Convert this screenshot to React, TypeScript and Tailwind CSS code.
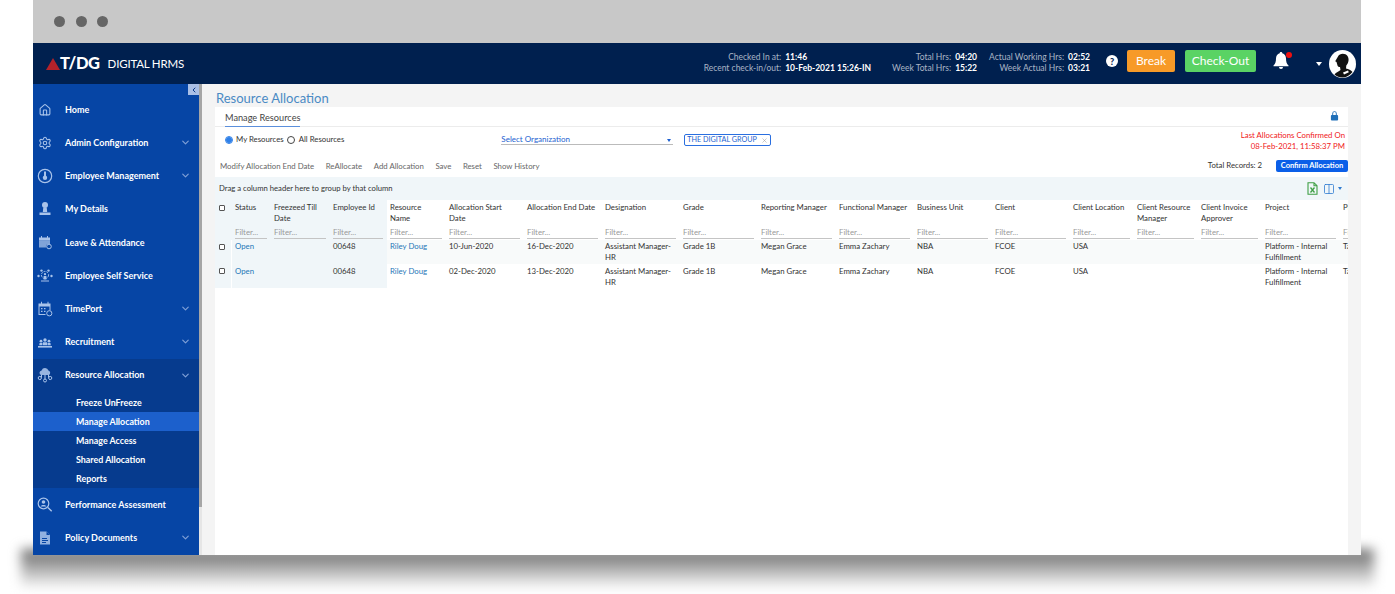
import React from "react";
import { Home, Settings, ChevronDown, ChevronLeft, Columns2, X } from "lucide-react";

type IconP = { className?: string };
const Svg = ({ className, children }: IconP & { children: React.ReactNode }) => (
  <svg viewBox="0 0 16 16" className={className} fill="currentColor">{children}</svg>
);
const HomeIcon = ({ className }: IconP) => <Home className={`${className} p-[1.5px]`} strokeWidth={2} />;
const GearIcon = ({ className }: IconP) => <Settings className={`${className} p-[1px]`} strokeWidth={1.8} />;
const EmpIcon = (p: IconP) => (
  <Svg {...p}>
    <circle cx="8" cy="8" r="6.7" fill="none" stroke="currentColor" strokeWidth="1.2" />
    <circle cx="8" cy="9.8" r="2.2" />
    <rect x="7" y="3.5" width="2" height="5" />
  </Svg>
);
const DetailsIcon = (p: IconP) => (
  <Svg {...p}>
    <circle cx="8" cy="4" r="3" />
    <path d="M6.3 6.5h3.4l.5 4.5H5.8z" />
    <path d="M2.5 11.5h11v2.5h-11z" />
  </Svg>
);
const LeaveIcon = (p: IconP) => (
  <Svg {...p}>
    <path d="M2 3.5h11v3H2zM4 2h1v2H4zM10 2h1v2h-1z" />
    <path d="M2 6.5h11V10h-1.5a3 3 0 0 0-2.5 3.5H2z" opacity=".75" />
    <circle cx="12" cy="12.5" r="2.3" fill="none" stroke="currentColor" strokeWidth="1" />
  </Svg>
);
const SelfIcon = (p: IconP) => (
  <Svg {...p}>
    <circle cx="8" cy="7" r="3.6" fill="none" stroke="currentColor" strokeWidth=".9" strokeDasharray="2 1" />
    <circle cx="8" cy="6.2" r="1.1" />
    <path d="M6.6 8h2.8v3.5H6.6z" />
    <circle cx="1.5" cy="8" r="1.2" /><circle cx="14.5" cy="8" r="1.2" />
    <circle cx="4.5" cy="2.6" r="1.2" /><circle cx="11.5" cy="2.6" r="1.2" />
    <path d="M4 12.5h8v1H4z" />
  </Svg>
);
const TimeIcon = (p: IconP) => (
  <Svg {...p}>
    <path d="M4 .8h1v2.4H4zM10.5.8h1v2.4h-1z" />
    <path d="M1.5 2.5h12v7h-1v-4h-10v7.5h6v1h-7z" />
    <path d="M4 7h1.5v1.3H4zM7 7h1.5v1.3H7zM4 9.7h1.5V11H4zM7 9.7h1.5V11H7z" />
    <circle cx="12.3" cy="12.3" r="2.6" fill="none" stroke="currentColor" strokeWidth="1" />
  </Svg>
);
const RecruitIcon = (p: IconP) => (
  <Svg {...p}>
    <circle cx="8" cy="6" r="1.7" /><circle cx="4" cy="7.2" r="1.4" /><circle cx="12" cy="7.2" r="1.4" />
    <path d="M6 8.3h4l.5 3h-5zM2.6 9h2.8l-.4 2.3H2.2zM10.6 9h2.8l.4 2.3h-2.8z" />
    <path d="M1 12h14v1.6H1z" />
  </Svg>
);
const ResIcon = (p: IconP) => (
  <Svg {...p}>
    <path d="M4 8a2.4 2.4 0 0 1 .6-4.6A3.6 3.6 0 0 1 11.4 3.6 2.4 2.4 0 0 1 12 8z" opacity=".9" />
    <g fill="none" stroke="currentColor" strokeWidth="1">
      <path d="M8 8v4.5M4.5 8v2.5M11.5 8v2.5" />
      <circle cx="2.8" cy="11" r="1.6" /><circle cx="13.2" cy="11" r="1.6" /><circle cx="8" cy="13.5" r="1.5" />
    </g>
  </Svg>
);
const PerfIcon = (p: IconP) => (
  <Svg {...p}>
    <circle cx="6.5" cy="6.5" r="5.3" fill="none" stroke="currentColor" strokeWidth="1.2" />
    <circle cx="6.5" cy="5" r="1.8" />
    <path d="M3.6 9.6c.5-2 5.3-2 5.8 0z" />
    <path d="M10.4 11l1-1 3.8 3.8-1 1z" />
  </Svg>
);
const DocIcon = (p: IconP) => (
  <Svg {...p}>
    <path d="M3 1.5h6.5L13 5v9.5H3z" opacity=".85" />
    <path d="M9.5 1.5V5H13z" fill="#0645a5" />
    <path d="M5 8h5v.9H5zM5 10h6v.9H5zM5 12h4v.9H5z" fill="#0645a5" />
  </Svg>
);

const nav1 = [
  { t: "Home", i: HomeIcon },
  { t: "Admin Configuration", i: GearIcon, c: true },
  { t: "Employee Management", i: EmpIcon, c: true },
  { t: "My Details", i: DetailsIcon },
  { t: "Leave & Attendance", i: LeaveIcon },
  { t: "Employee Self Service", i: SelfIcon },
  { t: "TimePort", i: TimeIcon, c: true },
  { t: "Recruitment", i: RecruitIcon, c: true },
];
const nav2 = [
  { t: "Performance Assessment", i: PerfIcon },
  { t: "Policy Documents", i: DocIcon, c: true },
];
const sub = ["Freeze UnFreeze", "Manage Allocation", "Manage Access", "Shared Allocation", "Reports"];

type C = { h: string; w: number; f?: boolean; v: string[] };
const cols: C[] = [
  { h: "Status", w: 39, f: true, v: ["Open", "Open"] },
  { h: "Freezeed Till Date", w: 59, f: true, v: ["", ""] },
  { h: "Employee Id", w: 57, f: true, v: ["00648", "00648"] },
  { h: "Resource Name", w: 59, v: ["Riley Doug", "Riley Doug"] },
  { h: "Allocation Start Date", w: 78, v: ["10-Jun-2020", "02-Dec-2020"] },
  { h: "Allocation End Date", w: 78, v: ["16-Dec-2020", "13-Dec-2020"] },
  { h: "Designation", w: 78, v: ["Assistant Manager-HR", "Assistant Manager-HR"] },
  { h: "Grade", w: 78, v: ["Grade 1B", "Grade 1B"] },
  { h: "Reporting Manager", w: 78, v: ["Megan Grace", "Megan Grace"] },
  { h: "Functional Manager", w: 78, v: ["Emma Zachary", "Emma Zachary"] },
  { h: "Business Unit", w: 78, v: ["NBA", "NBA"] },
  { h: "Client", w: 78, v: ["FCOE", "FCOE"] },
  { h: "Client Location", w: 64, v: ["USA", "USA"] },
  { h: "Client Resource Manager", w: 64, v: ["", ""] },
  { h: "Client Invoice Approver", w: 64, v: ["", ""] },
  { h: "Project", w: 78, v: ["Platform - Internal Fulfillment", "Platform - Internal Fulfillment"] },
  { h: "Pi", w: 78, v: ["Ta", "Ta"] },
];

function NavItem({ t, i: I, c }: { t: string; i: any; c?: boolean }) {
  return (
    <div className="flex h-[33.2px] items-center pl-[4px] pr-[8px]">
      <I className="h-[16px] w-[16px] shrink-0 text-[#a9c3ea]" />
      <span className="ml-[12px] flex-1 text-[9px] font-bold text-white">{t}</span>
      {c && <ChevronDown className="h-[11px] w-[11px] text-[#7f9fd6]" strokeWidth={2.6} />}
    </div>
  );
}

function Stat({ rows }: { rows: [string, string][] }) {
  return (
    <div className="mt-[-1px] grid grid-cols-[auto_auto] gap-x-[4px] gap-y-[0px] text-[8.5px] leading-[11.3px]">
      {rows.map(([a, b]) => (
        <React.Fragment key={a}>
          <span className="text-right text-[#aab5c5]">{a}</span>
          <span className="font-bold text-white">{b}</span>
        </React.Fragment>
      ))}
    </div>
  );
}

function Check() {
  return <span className="box-content block h-[4px] w-[4px] rounded-[1px] border border-[#555] bg-white" />;
}

export default function App() {
  return (
    <div className="h-[594px] w-[1395px] overflow-hidden bg-white px-[33px] font-['Lato','Noto_Sans',sans-serif] text-[#333]">
      <div className="relative z-10 flex h-[555px] w-[1328px] flex-col overflow-hidden">
        {/* window chrome */}
        <div className="flex h-[43px] shrink-0 items-center gap-[10.5px] bg-[#c8c8c8] pl-[21px]">
          <span className="h-[11px] w-[11px] rounded-full bg-[#666]" />
          <span className="h-[11px] w-[11px] rounded-full bg-[#666]" />
          <span className="h-[11px] w-[11px] rounded-full bg-[#666]" />
        </div>

        {/* header */}
        <header className="flex h-[41px] shrink-0 items-center bg-[#00204f] pr-[5px]">
          <div className="ml-[13px] flex items-center">
            <svg width="14" height="12" viewBox="0 0 14 12"><polygon points="7,0 14,12 0,12" fill="#b3222a" /></svg>
            <span className="text-[16.5px] font-black leading-none tracking-[-0.4px] text-white">T/DG</span>
          </div>
          <span className="ml-[8px] text-[11.5px] tracking-[-0.2px] text-white">DIGITAL HRMS</span>
          <div className="ml-auto flex items-center">
            <Stat rows={[["Checked In at:", "11:46"], ["Recent check-in/out:", "10-Feb-2021 15:26-IN"]]} />
            <div className="w-[21px]" />
            <Stat rows={[["Total Hrs:", "04:20"], ["Week Total Hrs:", "15:22"]]} />
            <div className="w-[12px]" />
            <Stat rows={[["Actual Working Hrs:", "02:52"], ["Week Actual Hrs:", "03:21"]]} />
            <span className="mb-[5px] ml-[16px] flex h-[12px] w-[12px] items-center justify-center rounded-full bg-white text-[9px] font-black leading-none text-[#00204f]">?</span>
            <button className="mb-[5px] ml-[9px] h-[22px] w-[48px] rounded-[2px] bg-[#f79a28] text-[12px] text-white">Break</button>
            <button className="mb-[5px] ml-[10px] h-[22px] w-[71px] rounded-[2px] bg-[#5ad364] text-[12px] text-white">Check-Out</button>
            <span className="relative mb-[6px] ml-[17px] block h-[17px] w-[16px]">
              <svg viewBox="0 0 16 17" className="h-[17px] w-[16px]" fill="#fff">
                <path d="M8 0c.8 0 1.3.5 1.3 1.3C11.8 2 13 4 13 6.500c0 3.500.8 5.200 2.500 7v.8H.5v-.8C2.200 11.700 3 10 3 6.500 3 4 4.200 2 6.700 1.300 6.700.5 7.200 0 8 0z" />
                <path d="M6 15h4a2 2 0 0 1-4 0z" />
              </svg>
              <span className="absolute right-[-3px] top-[0px] h-[6px] w-[6px] rounded-full bg-[#f01010]" />
            </span>
            <span className="ml-[27px] h-0 w-0 border-x-[3.5px] border-t-[4px] border-x-transparent border-t-white" />
            <svg className="ml-[7px]" width="27" height="28" viewBox="0 0 27 28">
              <ellipse cx="13.5" cy="14" rx="13.5" ry="14" fill="#fff" />
              <path d="M9 6.500C10.500 3 16.500 3 18.500 6c2 3 1 7-1.200 9.500l-.3 3c2.500.8 5 1.500 6.500 3.500-2.500 3.500-6.500 5.500-10 5.500-3 0-6-1-8-3 1.500-2.500 4.500-3 6-4.500l-.5-3c-1.500 0-2.500-.8-2.700-2.300L7.500 12l-1.300-.8z" fill="#111" />
              <path d="M14 22.500l5-2 .8 1.800-4.800 2.200z" fill="#fff" />
            </svg>
          </div>
        </header>

        <div className="flex min-h-0 flex-1">
          {/* sidebar */}
          <aside className="relative w-[166px] shrink-0 overflow-hidden bg-[#0645a5] pt-[9px]">
            <span className="absolute right-0 top-0 flex h-[11px] w-[11px] items-center justify-center bg-[#a9bfe6]">
              <ChevronLeft className="h-[8px] w-[8px] text-[#0a3a8a]" strokeWidth={3} />
            </span>
            {nav1.map((n) => <NavItem key={n.t} {...n} />)}
            <div className="bg-[#063b8e]">
              <NavItem t="Resource Allocation" i={ResIcon} c />
              <div className="pt-[1.5px]">
                {sub.map((s) => (
                  <div key={s} className={`flex h-[19px] items-center pl-[43px] text-[8.9px] font-bold text-white ${s === "Manage Allocation" ? "bg-[#1c60cc]" : ""}`}>{s}</div>
                ))}
              </div>
            </div>
            {nav2.map((n) => <NavItem key={n.t} {...n} />)}
          </aside>
          <div className="w-[3px] shrink-0 bg-[#e6e6e6]">
            <div className="h-[423px] bg-[#a6a6a6]" />
          </div>

          {/* main */}
          <main className="flex min-w-0 flex-1 flex-col bg-[#f4f4f4] pl-[13px] pr-[13px]">
            <h1 className="h-[23px] shrink-0 pl-[1px] pt-[6px] text-[13px] leading-[16px] text-[#4a8ac4]">Resource Allocation</h1>
            <section className="flex min-h-0 flex-1 flex-col overflow-hidden bg-white">
              <div className="flex h-[20px] shrink-0 items-stretch justify-between border-b border-[#ececec] pl-[10px] pr-[9px]">
                <span className="h-[20px] border-b border-[#5b8fdc] pt-[4px] text-[9.2px] leading-[13px] text-[#444]">Manage Resources</span>
                <svg viewBox="0 0 10 11" className="mt-[3px] h-[11px] w-[9px]" fill="#1f6fb8">
                  <path d="M2.500 5V3.200a2.500 2.500 0 0 1 5 0V5H6.500V3.200a1.500 1.500 0 0 0-3 0V5z" />
                  <rect x="1" y="5" width="8" height="6" rx="1" />
                </svg>
              </div>

              <div className="flex h-[50px] shrink-0">
                <div className="flex-1">
                  <div className="flex h-[28px] items-center pl-[10px] text-[7.8px]">
                    <span className="mt-[-3px] flex h-[8px] w-[8px] items-center justify-center rounded-full border border-[#2f80e8]"><span className="h-[6px] w-[6px] rounded-full bg-[#2f80e8]" /></span>
                    <span className="ml-[3px] mt-[-3px]">My Resources</span>
                    <span className="ml-[3px] mt-[-3px] h-[8px] w-[8px] rounded-full border border-[#444]" />
                    <span className="ml-[4px] mt-[-3px]">All Resources</span>
                    <div className="ml-[157px] mt-[-4px] flex h-[12px] w-[172px] items-center justify-between border-b border-[#bbb] text-[8px] text-[#1c5fd0]">
                      <span>Select Organization</span>
                      <span className="mr-[2px] mt-[3px] h-0 w-0 border-x-[2.5px] border-t-[3px] border-x-transparent border-t-[#1c5fd0]" />
                    </div>
                    <div className="ml-[11px] mt-[-2px] flex h-[12px] w-[87px] items-center justify-between rounded-[2px] border border-[#2a6fe0] pl-[2px] pr-[2px] text-[7.2px] text-[#1c5fd0]">
                      <span>THE DIGITAL GROUP</span>
                      <X className="h-[7px] w-[7px] text-[#888]" strokeWidth={1.5} />
                    </div>
                  </div>
                  <div className="flex h-[22px] items-center gap-[11.5px] pl-[5px] pt-[1px] text-[7.8px] text-[#666]">
                    {["Modify Allocation End Date", "ReAllocate", "Add Allocation", "Save", "Reset", "Show History"].map((a) => <span key={a}>{a}</span>)}
                  </div>
                </div>
                <div className="flex flex-col items-end">
                  <div className="pr-[3px] pt-[3px] text-right text-[7.8px] leading-[11px] text-[#f02020]">
                    <div>Last Allocations Confirmed On</div>
                    <div>08-Feb-2021, 11:58:37 PM</div>
                  </div>
                  <div className="mt-[8px] flex items-center gap-[14px] text-[7.8px]">
                    <span>Total Records: 2</span>
                    <button className="h-[12px] w-[72px] rounded-[2px] bg-[#0b5fe8] text-[7.5px] font-bold leading-none text-white">Confirm Allocation</button>
                  </div>
                </div>
              </div>

              <div className="flex h-[23px] shrink-0 items-center justify-between bg-[#f0f6f9] pl-[4px] pr-[6px] text-[7.7px]">
                <span>Drag a column header here to group by that column</span>
                <span className="flex items-center">
                  <svg viewBox="0 0 11 13" className="h-[13px] w-[11px]" fill="none" stroke="#3f9f45" strokeWidth="1.1">
                    <path d="M1 .7h6L10 3.700V12.300H1zM7 .7V3.700h3" />
                    <path d="M3.500 5.500l4 5M7.500 5.500l-4 5" strokeWidth="1.300" />
                  </svg>
                  <Columns2 className="ml-[5px] h-[12px] w-[12px] text-[#2f7bd0]" strokeWidth={1.6} />
                  <span className="ml-[3px] h-0 w-0 border-x-[2.5px] border-t-[3px] border-x-transparent border-t-[#2f7bd0]" />
                </span>
              </div>

              {/* table */}
              <div className="flex min-h-0 w-[1300px] text-[7.8px] leading-[11px]">
                <div className="w-[17px] shrink-0">
                  <div className="flex h-[40px] bg-[#f0f6f9] pl-[4px] pt-[5px]"><Check /></div>
                  <div className="flex h-[24px] items-start border-r border-white bg-[#f0f6f9] pl-[4px] pt-[4px]"><Check /></div>
                  <div className="flex h-[24px] items-start border-r border-white bg-[#f0f6f9] pl-[4px] pt-[4px]"><Check /></div>
                </div>
                {cols.map((c) => (
                  <div key={c.h} className="shrink-0" style={{ width: c.w }}>
                    <div className={`flex h-[40px] flex-col pl-[3px] pr-[4px] pt-[2px] ${c.f ? "bg-[#f0f6f9]" : ""}`}>
                      <div className="h-[22px] text-[#333]">{c.h}</div>
                      <div className="mt-[3px] h-[12px] border-b border-[#c4c4c4] text-[#999]">Filter...</div>
                    </div>
                    {c.v.map((v, i) => (
                      <div key={i} className={`h-[24px] pl-[3px] pr-[4px] ${i === 0 ? "pt-[1px]" : "pt-[2px]"} ${c.f ? "bg-[#f0f6f9]" : i === 0 ? "bg-[#f8fafa]" : ""} ${c.h === "Status" || c.h === "Resource Name" ? "text-[#1f76b8]" : ""}`}>{v}</div>
                    ))}
                  </div>
                ))}
              </div>
            </section>
          </main>
        </div>
      </div>
      {/* drop shadow strip below the window */}
      <div className="mx-[-12px] mt-[-6px] h-[40px] bg-gradient-to-b from-[#6a6a6a] to-[#ffffff] blur-[6px]" />
    </div>
  );
}
